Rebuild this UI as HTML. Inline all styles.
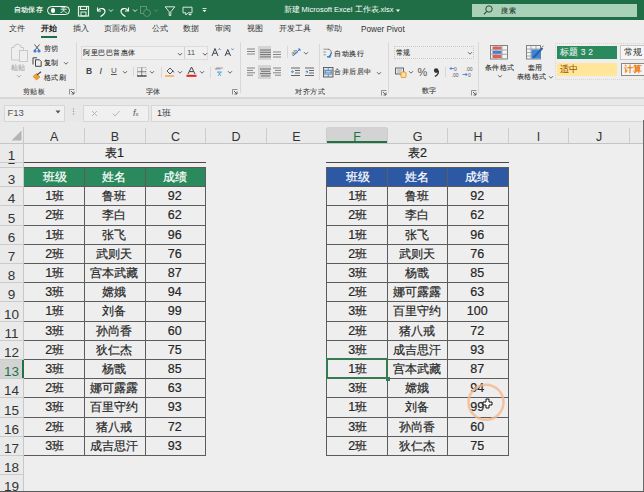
<!DOCTYPE html><html><head><meta charset="utf-8"><style>
*{margin:0;padding:0;box-sizing:border-box}
html,body{width:644px;height:492px;overflow:hidden}
body{position:relative;background:#eeeeee;font-family:"Liberation Sans",sans-serif;}
.a{position:absolute}
.t{position:absolute;white-space:nowrap}
</style></head><body>
<div class="a" style="left:0px;top:0px;width:644px;height:20px;background:#1f6e45;"></div>
<div class="t" style="left:14px;top:4.7px;height:9px;line-height:9px;font-size:7px;color:#ffffff;font-weight:normal;letter-spacing:0.2px;-webkit-text-stroke:0.15px #fff">自动保存</div>
<div class="a" style="left:46.5px;top:5.5px;width:23.5px;height:9.5px;border:1px solid #fff;border-radius:5px"></div>
<div class="a" style="left:50.5px;top:8px;width:4.5px;height:4.5px;background:#fff;border-radius:50%"></div>
<div class="t" style="left:59.5px;top:5.8px;height:8px;line-height:8px;font-size:6.5px;color:#ffffff;font-weight:normal;">关</div>
<svg class="a" style="left:77px;top:5px;" width="13" height="12" viewBox="0 0 13 12"><rect x="1.5" y="1.5" width="10" height="9.5" fill="none" stroke="#e8f0ea" stroke-width="1.2"/><rect x="3.5" y="1.5" width="6" height="3" fill="none" stroke="#e8f0ea" stroke-width="1"/><rect x="4" y="7" width="5" height="4" fill="none" stroke="#e8f0ea" stroke-width="1"/></svg>
<svg class="a" style="left:95px;top:5px;" width="12" height="12" viewBox="0 0 12 12"><path d="M2.5 2.5 L2.5 6 L6 6" fill="none" stroke="#fff" stroke-width="1.1"/><path d="M2.8 5.8 C5 2.5 10 3 10 6.5 C10 9 8 10 5.5 11.5" fill="none" stroke="#fff" stroke-width="1.1"/></svg>
<svg class="a" style="left:108px;top:8px;" width="6" height="5" viewBox="0 0 6 5"><path d="M1 1.5 L3 3.5 L5 1.5" fill="none" stroke="#fff" stroke-width="0.9"/></svg>
<svg class="a" style="left:119px;top:5px;" width="12" height="12" viewBox="0 0 12 12"><path d="M9.5 2.5 L9.5 6 L6 6" fill="none" stroke="#fff" stroke-width="1.1"/><path d="M9.2 5.8 C7 2.5 2 3 2 6.5 C2 9 4 10 6.5 11.5" fill="none" stroke="#fff" stroke-width="1.1"/></svg>
<svg class="a" style="left:132px;top:8px;" width="6" height="5" viewBox="0 0 6 5"><path d="M1 1.5 L3 3.5 L5 1.5" fill="none" stroke="#fff" stroke-width="0.9"/></svg>
<svg class="a" style="left:139px;top:5px;" width="13" height="12" viewBox="0 0 13 12"><rect x="1.5" y="1.5" width="6" height="7" fill="none" stroke="#5d9577" stroke-width="1"/><circle cx="8" cy="8" r="3.5" fill="#1f6e45" stroke="#5d9577" stroke-width="1"/></svg>
<svg class="a" style="left:153px;top:8px;" width="6" height="5" viewBox="0 0 6 5"><path d="M1 1.5 L3 3.5 L5 1.5" fill="none" stroke="#5d9577" stroke-width="0.9"/></svg>
<svg class="a" style="left:164px;top:5px;" width="12" height="12" viewBox="0 0 12 12"><path d="M1.2 1.8 L10.8 1.8 L6.8 6.8 L6.8 10.5 L5.2 10.5 L5.2 6.8 Z" fill="none" stroke="#f0f5f2" stroke-width="0.9" stroke-linejoin="round"/></svg>
<svg class="a" style="left:182px;top:6px;" width="11" height="10" viewBox="0 0 11 10"><path d="M1 1.2 L10 1.2 L10 6.8 L6 6.8 L3.8 9 L3.8 6.8 L1 6.8 Z" fill="none" stroke="#f0f5f2" stroke-width="0.9"/><path d="M9.5 8.5 L7 8.5 M8 7.5 L7 8.5 L8 9.5" fill="none" stroke="#fff" stroke-width="0.8"/></svg>
<svg class="a" style="left:201px;top:7px;" width="7" height="6" viewBox="0 0 7 6"><rect x="1.5" y="1" width="4" height="1" fill="#cfe0d5"/><path d="M1.5 3 L5.5 3 L3.5 5 Z" fill="#fff"/></svg>
<div class="t" style="left:283.5px;top:5.0px;height:10px;line-height:10px;font-size:7.5px;color:#ffffff;font-weight:normal;">新建 Microsoft Excel 工作表.xlsx</div>
<svg class="a" style="left:395px;top:8px;" width="6" height="5" viewBox="0 0 6 5"><path d="M1 1.5 L5 1.5 L3 4 Z" fill="#fff"/></svg>
<div class="a" style="left:472px;top:4px;width:165px;height:13px;background:#a8d1b7;"></div>
<svg class="a" style="left:482px;top:4px;" width="12" height="13" viewBox="0 0 12 13"><circle cx="7" cy="5" r="3.2" fill="none" stroke="#2e4a3a" stroke-width="1"/><path d="M4.7 7.3 L2 10.3" stroke="#2e4a3a" stroke-width="1.1"/></svg>
<div class="t" style="left:501px;top:5.7px;height:9px;line-height:9px;font-size:7px;color:#2a3a30;font-weight:normal;letter-spacing:0.5px;-webkit-text-stroke:0.1px #2a3a30;">搜索</div>
<div class="t" style="left:8.5px;top:24.3px;height:10px;line-height:10px;font-size:8px;color:#333333;font-weight:normal;">文件</div>
<div class="t" style="left:41px;top:24.3px;height:10px;line-height:10px;font-size:8px;color:#1a1a1a;font-weight:bold;">开始</div>
<div class="t" style="left:72.7px;top:24.3px;height:10px;line-height:10px;font-size:8px;color:#333333;font-weight:normal;">插入</div>
<div class="t" style="left:104px;top:24.3px;height:10px;line-height:10px;font-size:8px;color:#333333;font-weight:normal;">页面布局</div>
<div class="t" style="left:152px;top:24.3px;height:10px;line-height:10px;font-size:8px;color:#333333;font-weight:normal;">公式</div>
<div class="t" style="left:183px;top:24.3px;height:10px;line-height:10px;font-size:8px;color:#333333;font-weight:normal;">数据</div>
<div class="t" style="left:215px;top:24.3px;height:10px;line-height:10px;font-size:8px;color:#333333;font-weight:normal;">审阅</div>
<div class="t" style="left:247px;top:24.3px;height:10px;line-height:10px;font-size:8px;color:#333333;font-weight:normal;">视图</div>
<div class="t" style="left:279px;top:24.3px;height:10px;line-height:10px;font-size:8px;color:#333333;font-weight:normal;">开发工具</div>
<div class="t" style="left:326px;top:24.3px;height:10px;line-height:10px;font-size:8px;color:#333333;font-weight:normal;">帮助</div>
<div class="t" style="left:361px;top:23.8px;height:11px;line-height:11px;font-size:8.2px;color:#333333;font-weight:normal;">Power Pivot</div>
<div class="a" style="left:41px;top:36px;width:16px;height:2px;background:#1f6e45;"></div>
<div class="a" style="left:0px;top:97px;width:644px;height:1px;background:#dcd6d3;"></div>
<div class="a" style="left:0px;top:98px;width:644px;height:1px;background:#d6d6d6;"></div>
<svg class="a" style="left:10px;top:43px;" width="19" height="20" viewBox="0 0 19 20"><path d="M1.5 4.5 L1.5 17 L9 17 M13.5 4.5 L13.5 7" fill="none" stroke="#c4c4c4" stroke-width="0.9"/><path d="M1.5 4.5 L4 4.5 L4 2.8 L7.5 1 L11 2.8 L11 4.5 L13.5 4.5" fill="none" stroke="#c8c0bc" stroke-width="0.9"/><rect x="9.5" y="7.5" width="8" height="11" fill="#eeeeee" stroke="#c4c4c4" stroke-width="0.9"/></svg>
<div class="t" style="left:10.5px;top:62.5px;height:9px;line-height:9px;font-size:7px;color:#a8a8a8;font-weight:normal;letter-spacing:0.5px;-webkit-text-stroke:0.1px #a8a8a8;">粘贴</div>
<svg class="a" style="left:15.5px;top:74px;" width="6" height="5" viewBox="0 0 6 5"><path d="M1 1.2 L3 3.2 L5 1.2" fill="none" stroke="#a0a0a0" stroke-width="0.9"/></svg>
<svg class="a" style="left:33px;top:44px;" width="8" height="9" viewBox="0 0 8 9"><path d="M1.5 0.5 L6 6 M6.5 0.5 L2 6" stroke="#444" stroke-width="0.9"/><circle cx="2" cy="7" r="1.6" fill="#3b7dd8"/><circle cx="6" cy="7" r="1.6" fill="#3b7dd8"/></svg>
<div class="t" style="left:43.5px;top:44.2px;height:9px;line-height:9px;font-size:7px;color:#333333;font-weight:normal;letter-spacing:0.5px;-webkit-text-stroke:0.1px #333333;">剪切</div>
<svg class="a" style="left:32px;top:57px;" width="10" height="10" viewBox="0 0 10 10"><path d="M1 7.5 L1 0.8 L5 0.8" fill="none" stroke="#444" stroke-width="1"/><path d="M3.5 2.8 L7.5 2.8 L9.2 4.5 L9.2 9.3 L3.5 9.3 Z" fill="none" stroke="#444" stroke-width="1"/></svg>
<div class="t" style="left:43.5px;top:58.0px;height:9px;line-height:9px;font-size:7px;color:#333333;font-weight:normal;letter-spacing:0.5px;-webkit-text-stroke:0.1px #333333;">复制</div>
<svg class="a" style="left:62.5px;top:61px;" width="6" height="5" viewBox="0 0 6 5"><path d="M1 1.2 L3 3.2 L5 1.2" fill="none" stroke="#555" stroke-width="0.9"/></svg>
<svg class="a" style="left:32px;top:71px;" width="10" height="10" viewBox="0 0 10 10"><path d="M1 5.5 L4.5 2.5 L8 6 L4.5 9 Z" fill="#f0a030" stroke="#d07c10" stroke-width="0.6"/><path d="M5 4 L9 0.8" stroke="#444" stroke-width="1.1"/></svg>
<div class="t" style="left:43.5px;top:72.5px;height:9px;line-height:9px;font-size:7px;color:#333333;font-weight:normal;letter-spacing:0.5px;-webkit-text-stroke:0.1px #333333;">格式刷</div>
<div class="t" style="left:22.5px;top:87.0px;height:9px;line-height:9px;font-size:7px;color:#444;font-weight:normal;letter-spacing:0.5px;-webkit-text-stroke:0.1px #444;">剪贴板</div>
<svg class="a" style="left:69px;top:89px;" width="6" height="6" viewBox="0 0 6 6"><path d="M0.5 0.5 L5.5 0.5 M0.5 0.5 L0.5 5.5" stroke="#777" stroke-width="0.8"/><path d="M2 2 L5 5 M5 2.5 L5 5 L2.5 5" stroke="#555" stroke-width="0.9" fill="none"/></svg>
<div class="a" style="left:76px;top:42px;width:1px;height:51px;background:#ddd6d2"></div>
<div class="a" style="left:81px;top:46px;width:127px;height:13.5px;border:1px solid #e0dbd8;background:#f0f0f0"></div>
<div class="a" style="left:184px;top:47px;width:1px;height:12px;background:#d0d0d0;"></div>
<div class="t" style="left:83px;top:48.4px;height:9px;line-height:9px;font-size:7px;color:#333;font-weight:normal;letter-spacing:0.5px;-webkit-text-stroke:0.1px #333;">阿里巴巴普惠体</div>
<svg class="a" style="left:177px;top:51.5px;" width="6" height="5" viewBox="0 0 6 5"><path d="M1 1.2 L3 3.2 L5 1.2" fill="none" stroke="#444" stroke-width="0.9"/></svg>
<div class="t" style="left:187px;top:48.0px;height:10px;line-height:10px;font-size:8px;color:#555;font-weight:normal;">11</div>
<svg class="a" style="left:201.5px;top:51.5px;" width="6" height="5" viewBox="0 0 6 5"><path d="M1 1.2 L3 3.2 L5 1.2" fill="none" stroke="#444" stroke-width="0.9"/></svg>
<svg class="a" style="left:211px;top:47px;" width="10" height="10" viewBox="0 0 10 10"><path d="M1 9 L4 1.5 L7 9 M2.2 6.3 L5.8 6.3" fill="none" stroke="#444" stroke-width="1"/><path d="M7.5 3 L8.5 1.5 L9.5 3" fill="none" stroke="#3b7dd8" stroke-width="0.8"/></svg>
<svg class="a" style="left:224px;top:47px;" width="10" height="10" viewBox="0 0 10 10"><path d="M1 9 L3.8 2.5 L6.6 9 M2 6.8 L5.6 6.8" fill="none" stroke="#444" stroke-width="1"/><path d="M7.5 1.5 L8.5 3 L9.5 1.5" fill="none" stroke="#3b7dd8" stroke-width="0.8"/></svg>
<div class="t" style="left:86px;top:65.9px;height:11px;line-height:11px;font-size:8.5px;color:#444;font-weight:bold;">B</div>
<div class="t" style="left:99.5px;top:65.4px;height:12px;line-height:12px;font-size:9px;color:#333;font-weight:normal;font-style:italic;font-family:"Liberation Serif",serif">I</div>
<div class="t" style="left:111px;top:66.4px;height:10px;line-height:10px;font-size:8px;color:#555;font-weight:normal;text-decoration:underline">U</div>
<svg class="a" style="left:121.5px;top:70px;" width="6" height="5" viewBox="0 0 6 5"><path d="M1 1.2 L3 3.2 L5 1.2" fill="none" stroke="#555" stroke-width="0.9"/></svg>
<div class="a" style="left:132.5px;top:67px;width:1px;height:9px;background:#ddd6d2"></div>
<svg class="a" style="left:137px;top:67px;" width="10" height="10" viewBox="0 0 10 10"><rect x="0.5" y="0.5" width="8.5" height="8.5" fill="none" stroke="#888" stroke-width="0.8" stroke-dasharray="1 1"/><path d="M4.75 0.5 L4.75 9 M0.5 4.75 L9 4.75" stroke="#666" stroke-width="0.8"/><path d="M0 9 L9.5 9" stroke="#333" stroke-width="1.2"/></svg>
<svg class="a" style="left:149px;top:70px;" width="6" height="5" viewBox="0 0 6 5"><path d="M1 1.2 L3 3.2 L5 1.2" fill="none" stroke="#555" stroke-width="0.9"/></svg>
<div class="a" style="left:160.5px;top:67px;width:1px;height:11px;background:#ddd6d2"></div>
<svg class="a" style="left:165px;top:66px;" width="10" height="11" viewBox="0 0 10 11"><path d="M2 5 L5 2 L8 5 L5 8 Z" fill="none" stroke="#444" stroke-width="0.9"/><path d="M8 4.5 L9 6.5" stroke="#3b7dd8" stroke-width="1"/><rect x="0" y="9" width="9" height="2" fill="#f5b870"/></svg>
<svg class="a" style="left:177px;top:70px;" width="6" height="5" viewBox="0 0 6 5"><path d="M1 1.2 L3 3.2 L5 1.2" fill="none" stroke="#555" stroke-width="0.9"/></svg>
<svg class="a" style="left:186px;top:66px;" width="11" height="11" viewBox="0 0 11 11"><path d="M2 8 L5.5 1 L9 8 M3.3 5.6 L7.7 5.6" fill="none" stroke="#444" stroke-width="1"/><rect x="0.5" y="8.8" width="10" height="2" fill="#e0201b"/></svg>
<svg class="a" style="left:199px;top:70px;" width="6" height="5" viewBox="0 0 6 5"><path d="M1 1.2 L3 3.2 L5 1.2" fill="none" stroke="#555" stroke-width="0.9"/></svg>
<div class="a" style="left:209.5px;top:67px;width:1px;height:11px;background:#ddd6d2"></div>
<svg class="a" style="left:214px;top:66px;" width="11" height="11" viewBox="0 0 11 11"><path d="M2 2 L9 2" stroke="#888" stroke-width="0.8"/><text x="1" y="4" font-size="3" fill="#777">wén</text><path d="M3 6 L8 6 M4 6 L7 10 M7 6 L4 10" stroke="#3b9de0" stroke-width="0.8"/></svg>
<svg class="a" style="left:226.5px;top:70px;" width="6" height="5" viewBox="0 0 6 5"><path d="M1 1.2 L3 3.2 L5 1.2" fill="none" stroke="#555" stroke-width="0.9"/></svg>
<div class="t" style="left:145.5px;top:86.5px;height:9px;line-height:9px;font-size:7px;color:#444;font-weight:normal;letter-spacing:0.5px;-webkit-text-stroke:0.1px #444;">字体</div>
<svg class="a" style="left:232px;top:89px;" width="6" height="6" viewBox="0 0 6 6"><path d="M0.5 0.5 L5.5 0.5 M0.5 0.5 L0.5 5.5" stroke="#777" stroke-width="0.8"/><path d="M2 2 L5 5 M5 2.5 L5 5 L2.5 5" stroke="#555" stroke-width="0.9" fill="none"/></svg>
<div class="a" style="left:239.5px;top:42px;width:1px;height:51px;background:#ddd6d2"></div>
<div class="a" style="left:258px;top:46px;width:13px;height:13.5px;background:#d4d4d4;"></div>
<div class="a" style="left:258px;top:65px;width:13px;height:13.5px;background:#d4d4d4;"></div>
<svg class="a" style="left:247px;top:47.5px;" width="12" height="12" viewBox="0 0 12 12"><path d="M0 1.0 L8 1.0" stroke="#6a6a6a" stroke-width="0.8"/><path d="M0 3.5 L8 3.5" stroke="#6a6a6a" stroke-width="0.8"/><path d="M0 6.0 L8 6.0" stroke="#6a6a6a" stroke-width="0.8"/></svg>
<svg class="a" style="left:259px;top:48.5px;" width="12" height="12" viewBox="0 0 12 12"><path d="M1 1.0 L12 1.0" stroke="#555" stroke-width="0.8"/><path d="M1 3.3 L12 3.3" stroke="#555" stroke-width="0.8"/><path d="M1 5.6 L12 5.6" stroke="#555" stroke-width="0.8"/><path d="M1 7.8999999999999995 L12 7.8999999999999995" stroke="#555" stroke-width="0.8"/></svg>
<svg class="a" style="left:273px;top:51px;" width="12" height="12" viewBox="0 0 12 12"><path d="M0 1.0 L8 1.0" stroke="#6a6a6a" stroke-width="0.8"/><path d="M0 3.5 L8 3.5" stroke="#6a6a6a" stroke-width="0.8"/><path d="M0 6.0 L8 6.0" stroke="#6a6a6a" stroke-width="0.8"/></svg>
<svg class="a" style="left:247px;top:67px;" width="12" height="12" viewBox="0 0 12 12"><path d="M0 1.0 L8 1.0" stroke="#6a6a6a" stroke-width="0.8"/><path d="M0 3.4 L6 3.4" stroke="#6a6a6a" stroke-width="0.8"/><path d="M0 5.8 L8 5.8" stroke="#6a6a6a" stroke-width="0.8"/><path d="M0 8.2 L6 8.2" stroke="#6a6a6a" stroke-width="0.8"/></svg>
<svg class="a" style="left:259px;top:67.5px;" width="12" height="12" viewBox="0 0 12 12"><path d="M1 1.0 L12 1.0" stroke="#555" stroke-width="0.8"/><path d="M2 3.3 L11 3.3" stroke="#555" stroke-width="0.8"/><path d="M1 5.6 L12 5.6" stroke="#555" stroke-width="0.8"/><path d="M2 7.8999999999999995 L11 7.8999999999999995" stroke="#555" stroke-width="0.8"/></svg>
<svg class="a" style="left:273px;top:67px;" width="12" height="12" viewBox="0 0 12 12"><path d="M0 1.0 L8 1.0" stroke="#6a6a6a" stroke-width="0.8"/><path d="M2 3.4 L8 3.4" stroke="#6a6a6a" stroke-width="0.8"/><path d="M0 5.8 L8 5.8" stroke="#6a6a6a" stroke-width="0.8"/><path d="M2 8.2 L8 8.2" stroke="#6a6a6a" stroke-width="0.8"/></svg>
<div class="a" style="left:286.5px;top:46px;width:1px;height:12px;background:#ddd6d2"></div>
<svg class="a" style="left:291px;top:47px;" width="10" height="10" viewBox="0 0 10 10"><text x="0" y="7" font-size="6" fill="#555" transform="rotate(-35 4 5)">ab</text><path d="M2 9 L9 2 M7 2 L9 2 L9 4" fill="none" stroke="#3b7dd8" stroke-width="1"/></svg>
<svg class="a" style="left:302.5px;top:51px;" width="6" height="5" viewBox="0 0 6 5"><path d="M1 1.2 L3 3.2 L5 1.2" fill="none" stroke="#555" stroke-width="0.9"/></svg>
<svg class="a" style="left:291px;top:67px;" width="10" height="10" viewBox="0 0 10 10"><path d="M0 1 L9 1 M4 3.5 L9 3.5 M4 6 L9 6 M0 8.5 L9 8.5" stroke="#555" stroke-width="0.9"/><path d="M3 4.75 L0.5 4.75 M1.8 3.5 L0.5 4.75 L1.8 6" fill="none" stroke="#3b7dd8" stroke-width="0.9"/></svg>
<svg class="a" style="left:304.5px;top:67px;" width="10" height="10" viewBox="0 0 10 10"><path d="M0 1 L9 1 M4 3.5 L9 3.5 M4 6 L9 6 M0 8.5 L9 8.5" stroke="#555" stroke-width="0.9"/><path d="M0.5 4.75 L3 4.75 M1.7 3.5 L3 4.75 L1.7 6" fill="none" stroke="#3b7dd8" stroke-width="0.9"/></svg>
<div class="a" style="left:318.5px;top:44px;width:1px;height:36px;background:#ddd6d2"></div>
<svg class="a" style="left:323px;top:47.5px;" width="11" height="11" viewBox="0 0 11 11"><path d="M0.5 1.2 L5.5 1.2 M0.5 4 L3 4 M0.5 6.8 L3 6.8" stroke="#888" stroke-width="0.9"/><path d="M5 1.2 C9 1.2 9.5 6.5 6 8.2 L4.5 8.8" fill="none" stroke="#777" stroke-width="0.9"/><path d="M8.5 4.5 L6.5 9 M4 8.7 L6.8 9.2 L7.8 6.8" fill="none" stroke="#2f86d6" stroke-width="1.2"/></svg>
<div class="t" style="left:334.4px;top:48.5px;height:9px;line-height:9px;font-size:7px;color:#333333;font-weight:normal;letter-spacing:0.5px;-webkit-text-stroke:0.1px #333333;">自动换行</div>
<svg class="a" style="left:322.5px;top:66.5px;" width="11" height="11" viewBox="0 0 11 11"><rect x="0.5" y="0.5" width="9.5" height="9.5" fill="#d7e6f5" stroke="#555" stroke-width="0.9"/><path d="M0.5 3.3 L10 3.3 M0.5 7 L10 7" stroke="#666" stroke-width="0.8"/><path d="M1.5 5.2 L9 5.2 M3 4.2 L1.5 5.2 L3 6.2 M7.5 4.2 L9 5.2 L7.5 6.2" fill="none" stroke="#2f86d6" stroke-width="0.8"/><path d="M5.25 0.5 L5.25 3.3 M5.25 7 L5.25 10" stroke="#2f86d6" stroke-width="0.8"/></svg>
<div class="t" style="left:334.4px;top:67.4px;height:9px;line-height:9px;font-size:7px;color:#333333;font-weight:normal;letter-spacing:0.5px;-webkit-text-stroke:0.1px #333333;">合并后居中</div>
<svg class="a" style="left:375.5px;top:70.5px;" width="6" height="5" viewBox="0 0 6 5"><path d="M1 1.2 L3 3.2 L5 1.2" fill="none" stroke="#555" stroke-width="0.9"/></svg>
<div class="t" style="left:295px;top:87.1px;height:9px;line-height:9px;font-size:7px;color:#444;font-weight:normal;letter-spacing:0.5px;-webkit-text-stroke:0.1px #444;">对齐方式</div>
<svg class="a" style="left:381px;top:89.5px;" width="6" height="6" viewBox="0 0 6 6"><path d="M0.5 0.5 L5.5 0.5 M0.5 0.5 L0.5 5.5" stroke="#777" stroke-width="0.8"/><path d="M2 2 L5 5 M5 2.5 L5 5 L2.5 5" stroke="#555" stroke-width="0.9" fill="none"/></svg>
<div class="a" style="left:388.4px;top:42px;width:1px;height:51px;background:#ddd6d2"></div>
<div class="a" style="left:393.5px;top:46px;width:80.5px;height:13px;border:1px dotted #cfc6c2"></div>
<div class="t" style="left:395.6px;top:48.2px;height:9px;line-height:9px;font-size:7px;color:#333;font-weight:normal;letter-spacing:0.5px;-webkit-text-stroke:0.1px #333;">常规</div>
<svg class="a" style="left:466.5px;top:51px;" width="6" height="5" viewBox="0 0 6 5"><path d="M1 1.2 L3 3.2 L5 1.2" fill="none" stroke="#555" stroke-width="0.9"/></svg>
<svg class="a" style="left:395px;top:67px;" width="12" height="11" viewBox="0 0 12 11"><rect x="0.5" y="1" width="8" height="6" fill="none" stroke="#555" stroke-width="0.9"/><path d="M2 3 L7 3 M2 5 L6 5" stroke="#777" stroke-width="0.6"/><rect x="6" y="5" width="5" height="5.5" rx="1" fill="#fbe1a8" stroke="#e8921a" stroke-width="0.9"/></svg>
<svg class="a" style="left:407.5px;top:70px;" width="6" height="5" viewBox="0 0 6 5"><path d="M1 1.2 L3 3.2 L5 1.2" fill="none" stroke="#555" stroke-width="0.9"/></svg>
<div class="t" style="left:417.5px;top:65.0px;height:14px;line-height:14px;font-size:11px;color:#555;font-weight:normal;">%</div>
<svg class="a" style="left:433px;top:68px;" width="7" height="9" viewBox="0 0 7 9"><circle cx="3.2" cy="2.6" r="2.3" fill="#333"/><path d="M5.3 2.8 C5.6 5.5 4 7.5 1.8 8.3" fill="none" stroke="#333" stroke-width="1.4"/></svg>
<div class="a" style="left:444.8px;top:67px;width:1px;height:10px;background:#ddd6d2"></div>
<svg class="a" style="left:449px;top:66px;" width="11" height="11" viewBox="0 0 11 11"><text x="5" y="4.5" font-size="5" fill="#555">0</text><text x="2.5" y="10.5" font-size="5" fill="#555">.00</text><path d="M5 2.5 L1 2.5 M2.5 1 L1 2.5 L2.5 4" fill="none" stroke="#3b7dd8" stroke-width="0.9"/></svg>
<svg class="a" style="left:462px;top:66px;" width="11" height="11" viewBox="0 0 11 11"><text x="3.5" y="4.5" font-size="5" fill="#555">.00</text><text x="6" y="10.5" font-size="5" fill="#555">0</text><path d="M0.5 8.5 L5 8.5 M3.5 7 L5 8.5 L3.5 10" fill="none" stroke="#3b7dd8" stroke-width="0.9"/></svg>
<div class="t" style="left:421.5px;top:86.3px;height:9px;line-height:9px;font-size:7px;color:#444;font-weight:normal;letter-spacing:0.5px;-webkit-text-stroke:0.1px #444;">数字</div>
<svg class="a" style="left:471px;top:89.5px;" width="6" height="6" viewBox="0 0 6 6"><path d="M0.5 0.5 L5.5 0.5 M0.5 0.5 L0.5 5.5" stroke="#777" stroke-width="0.8"/><path d="M2 2 L5 5 M5 2.5 L5 5 L2.5 5" stroke="#555" stroke-width="0.9" fill="none"/></svg>
<div class="a" style="left:478.4px;top:42px;width:1px;height:51px;background:#ddd6d2"></div>
<svg class="a" style="left:490px;top:45px;" width="18" height="15" viewBox="0 0 18 15"><rect x="0.5" y="0.5" width="17" height="13.5" fill="#f4f4f4" stroke="#777" stroke-width="0.9"/><rect x="2.5" y="1.5" width="9" height="3" fill="#e85a4f"/><rect x="2.5" y="5.8" width="9" height="3" fill="#3b7dd8"/><rect x="2.5" y="10" width="9" height="3" fill="#e85a4f"/><path d="M0.5 5 L17.5 5 M0.5 9.3 L17.5 9.3 M6 0.5 L6 14 M12 0.5 L12 14" stroke="#888" stroke-width="0.7"/></svg>
<div class="t" style="left:484.6px;top:63.0px;height:9px;line-height:9px;font-size:7px;color:#333333;font-weight:normal;letter-spacing:0.5px;-webkit-text-stroke:0.1px #333333;">条件格式</div>
<svg class="a" style="left:497px;top:73.6px;" width="6" height="5" viewBox="0 0 6 5"><path d="M1 1.2 L3 3.2 L5 1.2" fill="none" stroke="#555" stroke-width="0.9"/></svg>
<svg class="a" style="left:526px;top:45px;" width="18" height="15" viewBox="0 0 18 15"><rect x="0.5" y="0.5" width="14" height="13.5" fill="#f4f4f4" stroke="#777" stroke-width="0.9"/><path d="M0.5 4 L14.5 4 M0.5 7.5 L14.5 7.5 M0.5 11 L14.5 11 M5 0.5 L5 14 M10 0.5 L10 14" stroke="#888" stroke-width="0.7"/><rect x="5.5" y="4.5" width="9" height="9" fill="#3b86d8"/><path d="M7 13 L16.5 3" stroke="#2a60a8" stroke-width="2"/><path d="M16 2 L17.5 0.8" stroke="#777" stroke-width="1"/></svg>
<div class="t" style="left:527.8px;top:63.0px;height:9px;line-height:9px;font-size:7px;color:#333333;font-weight:normal;letter-spacing:0.5px;-webkit-text-stroke:0.1px #333333;">套用</div>
<div class="t" style="left:516.6px;top:71.5px;height:9px;line-height:9px;font-size:7px;color:#333333;font-weight:normal;letter-spacing:0.5px;-webkit-text-stroke:0.1px #333333;">表格格式</div>
<svg class="a" style="left:547.5px;top:74.5px;" width="6" height="5" viewBox="0 0 6 5"><path d="M1 1.2 L3 3.2 L5 1.2" fill="none" stroke="#555" stroke-width="0.9"/></svg>
<div class="a" style="left:555px;top:42.5px;width:95px;height:37px;border:1px dotted #e0d4ce"></div>
<div class="a" style="left:557px;top:46px;width:60px;height:12.5px;background:#2a8a5e;"></div>
<div class="t" style="left:560.2px;top:46.5px;height:11px;line-height:11px;font-size:8.5px;color:#e3f0e8;font-weight:normal;letter-spacing:0.1px;-webkit-text-stroke:0.1px #e3f0e8">标题 3 2</div>
<div class="a" style="left:619.5px;top:44.5px;width:30px;height:15.5px;border:1.5px solid #c8c8c8;background:#f6f6f6"></div>
<div class="t" style="left:623.7px;top:46.8px;height:11px;line-height:11px;font-size:8.5px;color:#333;font-weight:normal;letter-spacing:0.3px">常规</div>
<div class="a" style="left:557px;top:63px;width:60px;height:12.7px;background:#ffe69a;"></div>
<div class="t" style="left:559.5px;top:63.8px;height:11px;line-height:11px;font-size:8.5px;color:#9c5700;font-weight:normal;letter-spacing:0.3px;-webkit-text-stroke:0.1px #9c5700">适中</div>
<div class="a" style="left:621px;top:63px;width:30px;height:12.7px;border:1px solid #888;background:#f4f4f4"></div>
<div class="t" style="left:623.7px;top:63.8px;height:11px;line-height:11px;font-size:8.5px;color:#f07d10;font-weight:bold;letter-spacing:0.3px">计算</div>
<div class="a" style="left:0px;top:99px;width:644px;height:23px;background:#e8e8e8;"></div>
<div class="a" style="left:3.5px;top:104.5px;width:61px;height:17px;border:1px solid #d6d6d6;background:#f0f0f0"></div>
<div class="t" style="left:7.5px;top:107.2px;height:12px;line-height:12px;font-size:9.5px;color:#555;font-weight:normal;">F13</div>
<svg class="a" style="left:55px;top:110px;" width="6" height="4" viewBox="0 0 6 4"><path d="M0.5 0.5 L5.5 0.5 L3 3.5 Z" fill="#555"/></svg>
<svg class="a" style="left:72px;top:108px;" width="3" height="8" viewBox="0 0 3 8"><circle cx="1.5" cy="1" r="0.7" fill="#999"/><circle cx="1.5" cy="3.5" r="0.7" fill="#999"/><circle cx="1.5" cy="6" r="0.7" fill="#999"/></svg>
<div class="a" style="left:82.5px;top:105px;width:66px;height:16.5px;border:1px solid #d6d6d6;background:#f0f0f0"></div>
<svg class="a" style="left:90.5px;top:110px;" width="7" height="7" viewBox="0 0 7 7"><path d="M1 1 L6 6 M6 1 L1 6" stroke="#b0b0b0" stroke-width="0.9"/></svg>
<svg class="a" style="left:111.5px;top:110px;" width="8" height="7" viewBox="0 0 8 7"><path d="M0.8 3.5 L3 6 L7.5 1" fill="none" stroke="#b0b0b0" stroke-width="0.9"/></svg>
<div class="t" style="left:133px;top:107.0px;height:12px;line-height:12px;font-size:9px;color:#555;font-weight:normal;font-family:"Liberation Serif",serif"><i>f</i><span style="font-size:6px">x</span></div>
<div class="a" style="left:150.5px;top:104.5px;width:500px;height:17px;border:1px solid #d6d6d6;background:#f0f0f0"></div>
<div class="t" style="left:157px;top:107.0px;height:12px;line-height:12px;font-size:9px;color:#333;font-weight:normal;">1班</div>
<div class="a" style="left:0px;top:122px;width:644px;height:21px;background:#eaeaea;"></div>
<div class="a" style="left:0px;top:143px;width:644px;height:1px;background:#c4c4c4;"></div>
<div class="a" style="left:0px;top:144px;width:23px;height:348px;background:#eaeaea;"></div>
<svg class="a" style="left:11px;top:130px;" width="11" height="11" viewBox="0 0 11 11"><path d="M10.5 0.5 L10.5 10.5 L0.5 10.5 Z" fill="#b4b4b4"/></svg>
<div class="t" style="left:-95.75px;width:300px;text-align:center;top:129.1px;height:16px;line-height:16px;font-size:12.5px;color:#333;font-weight:normal;">A</div>
<div class="a" style="left:84px;top:128px;width:1px;height:15px;background:#cdcdcd;"></div>
<div class="t" style="left:-35.0px;width:300px;text-align:center;top:129.1px;height:16px;line-height:16px;font-size:12.5px;color:#333;font-weight:normal;">B</div>
<div class="a" style="left:145px;top:128px;width:1px;height:15px;background:#cdcdcd;"></div>
<div class="t" style="left:25.5px;width:300px;text-align:center;top:129.1px;height:16px;line-height:16px;font-size:12.5px;color:#333;font-weight:normal;">C</div>
<div class="a" style="left:205px;top:128px;width:1px;height:15px;background:#cdcdcd;"></div>
<div class="t" style="left:86.0px;width:300px;text-align:center;top:129.1px;height:16px;line-height:16px;font-size:12.5px;color:#333;font-weight:normal;">D</div>
<div class="a" style="left:266px;top:128px;width:1px;height:15px;background:#cdcdcd;"></div>
<div class="t" style="left:146.5px;width:300px;text-align:center;top:129.1px;height:16px;line-height:16px;font-size:12.5px;color:#333;font-weight:normal;">E</div>
<div class="a" style="left:326px;top:128px;width:1px;height:15px;background:#cdcdcd;"></div>
<div class="a" style="left:327px;top:127px;width:60px;height:16px;background:#d3d3d3;"></div>
<div class="a" style="left:327px;top:141px;width:60px;height:2px;background:#217346;"></div>
<div class="t" style="left:207.0px;width:300px;text-align:center;top:129.1px;height:16px;line-height:16px;font-size:12.5px;color:#217346;font-weight:normal;">F</div>
<div class="a" style="left:387px;top:128px;width:1px;height:15px;background:#cdcdcd;"></div>
<div class="t" style="left:267.5px;width:300px;text-align:center;top:129.1px;height:16px;line-height:16px;font-size:12.5px;color:#333;font-weight:normal;">G</div>
<div class="a" style="left:447px;top:128px;width:1px;height:15px;background:#cdcdcd;"></div>
<div class="t" style="left:328.0px;width:300px;text-align:center;top:129.1px;height:16px;line-height:16px;font-size:12.5px;color:#333;font-weight:normal;">H</div>
<div class="a" style="left:508px;top:128px;width:1px;height:15px;background:#cdcdcd;"></div>
<div class="t" style="left:388.5px;width:300px;text-align:center;top:129.1px;height:16px;line-height:16px;font-size:12.5px;color:#333;font-weight:normal;">I</div>
<div class="a" style="left:568px;top:128px;width:1px;height:15px;background:#cdcdcd;"></div>
<div class="t" style="left:449.0px;width:300px;text-align:center;top:129.1px;height:16px;line-height:16px;font-size:12.5px;color:#333;font-weight:normal;">J</div>
<div class="a" style="left:629px;top:128px;width:1px;height:15px;background:#cdcdcd;"></div>
<div class="a" style="left:0px;top:162px;width:23px;height:1px;background:#cbcbcb;"></div>
<div class="t" style="left:0;width:23px;text-align:center;top:148.1px;height:16px;line-height:16px;font-size:13.5px;color:#333">1</div>
<div class="a" style="left:0px;top:167px;width:23px;height:1px;background:#cbcbcb;"></div>
<div class="a" style="left:0;top:163px;width:23px;height:4px;overflow:hidden"><div class="t" style="left:0;width:23px;text-align:center;top:-11px;font-size:13.5px;height:16px;line-height:16px;color:#333">2</div></div>
<div class="a" style="left:0px;top:186px;width:23px;height:1px;background:#cbcbcb;"></div>
<div class="t" style="left:0;width:23px;text-align:center;top:172.1px;height:16px;line-height:16px;font-size:13.5px;color:#333">3</div>
<div class="a" style="left:0px;top:205px;width:23px;height:1px;background:#cbcbcb;"></div>
<div class="t" style="left:0;width:23px;text-align:center;top:191.1px;height:16px;line-height:16px;font-size:13.5px;color:#333">4</div>
<div class="a" style="left:0px;top:225px;width:23px;height:1px;background:#cbcbcb;"></div>
<div class="t" style="left:0;width:23px;text-align:center;top:210.6px;height:16px;line-height:16px;font-size:13.5px;color:#333">5</div>
<div class="a" style="left:0px;top:244px;width:23px;height:1px;background:#cbcbcb;"></div>
<div class="t" style="left:0;width:23px;text-align:center;top:230.1px;height:16px;line-height:16px;font-size:13.5px;color:#333">6</div>
<div class="a" style="left:0px;top:263px;width:23px;height:1px;background:#cbcbcb;"></div>
<div class="t" style="left:0;width:23px;text-align:center;top:249.1px;height:16px;line-height:16px;font-size:13.5px;color:#333">7</div>
<div class="a" style="left:0px;top:282px;width:23px;height:1px;background:#cbcbcb;"></div>
<div class="t" style="left:0;width:23px;text-align:center;top:268.1px;height:16px;line-height:16px;font-size:13.5px;color:#333">8</div>
<div class="a" style="left:0px;top:301px;width:23px;height:1px;background:#cbcbcb;"></div>
<div class="t" style="left:0;width:23px;text-align:center;top:287.1px;height:16px;line-height:16px;font-size:13.5px;color:#333">9</div>
<div class="a" style="left:0px;top:321px;width:23px;height:1px;background:#cbcbcb;"></div>
<div class="t" style="left:0;width:23px;text-align:center;top:306.6px;height:16px;line-height:16px;font-size:13.5px;color:#333">10</div>
<div class="a" style="left:0px;top:340px;width:23px;height:1px;background:#cbcbcb;"></div>
<div class="t" style="left:0;width:23px;text-align:center;top:326.1px;height:16px;line-height:16px;font-size:13.5px;color:#333">11</div>
<div class="a" style="left:0px;top:359px;width:23px;height:1px;background:#cbcbcb;"></div>
<div class="t" style="left:0;width:23px;text-align:center;top:345.1px;height:16px;line-height:16px;font-size:13.5px;color:#333">12</div>
<div class="a" style="left:0px;top:360px;width:23px;height:18px;background:#d3d3d3;"></div>
<div class="a" style="left:0px;top:378px;width:23px;height:1px;background:#cbcbcb;"></div>
<div class="t" style="left:0;width:23px;text-align:center;top:364.1px;height:16px;line-height:16px;font-size:13.5px;color:#217346">13</div>
<div class="a" style="left:0px;top:397px;width:23px;height:1px;background:#cbcbcb;"></div>
<div class="t" style="left:0;width:23px;text-align:center;top:383.1px;height:16px;line-height:16px;font-size:13.5px;color:#333">14</div>
<div class="a" style="left:0px;top:417px;width:23px;height:1px;background:#cbcbcb;"></div>
<div class="t" style="left:0;width:23px;text-align:center;top:402.6px;height:16px;line-height:16px;font-size:13.5px;color:#333">15</div>
<div class="a" style="left:0px;top:436px;width:23px;height:1px;background:#cbcbcb;"></div>
<div class="t" style="left:0;width:23px;text-align:center;top:422.1px;height:16px;line-height:16px;font-size:13.5px;color:#333">16</div>
<div class="a" style="left:0px;top:455px;width:23px;height:1px;background:#cbcbcb;"></div>
<div class="t" style="left:0;width:23px;text-align:center;top:441.1px;height:16px;line-height:16px;font-size:13.5px;color:#333">17</div>
<div class="a" style="left:0px;top:474px;width:23px;height:1px;background:#cbcbcb;"></div>
<div class="t" style="left:0;width:23px;text-align:center;top:460.1px;height:16px;line-height:16px;font-size:13.5px;color:#333">18</div>
<div class="a" style="left:0px;top:493px;width:23px;height:1px;background:#cbcbcb;"></div>
<div class="t" style="left:0;width:23px;text-align:center;top:479.1px;height:16px;line-height:16px;font-size:13.5px;color:#333">19</div>
<div class="a" style="left:23px;top:127px;width:1px;height:365px;background:#c8c8c8;"></div>
<div class="a" style="left:22px;top:360px;width:2px;height:18px;background:#217346;"></div>
<div class="a" style="left:643px;top:120px;width:1px;height:372px;background:#6a6a6a;"></div>
<div class="a" style="left:0px;top:491px;width:644px;height:1px;background:#5a5a5a;"></div>
<div class="t" style="left:64.5px;width:100px;text-align:center;top:143.3px;height:18px;line-height:18px;color:#222;-webkit-text-stroke:0.2px #222"><span style="font-size:12px">表</span><span style="font-size:12.5px">1</span></div>
<div class="a" style="left:24px;top:162px;width:182px;height:1px;background:#4a4a4a;"></div>
<div class="a" style="left:24px;top:167px;width:181px;height:19px;background:#2a8a5e;"></div>
<div class="a" style="left:24px;top:167px;width:182px;height:1px;background:#5c5c5c;"></div>
<div class="a" style="left:24px;top:186px;width:182px;height:1px;background:#5c5c5c;"></div>
<div class="a" style="left:24px;top:205px;width:182px;height:1px;background:#5c5c5c;"></div>
<div class="a" style="left:24px;top:225px;width:182px;height:1px;background:#5c5c5c;"></div>
<div class="a" style="left:24px;top:244px;width:182px;height:1px;background:#5c5c5c;"></div>
<div class="a" style="left:24px;top:263px;width:182px;height:1px;background:#5c5c5c;"></div>
<div class="a" style="left:24px;top:282px;width:182px;height:1px;background:#5c5c5c;"></div>
<div class="a" style="left:24px;top:301px;width:182px;height:1px;background:#5c5c5c;"></div>
<div class="a" style="left:24px;top:321px;width:182px;height:1px;background:#5c5c5c;"></div>
<div class="a" style="left:24px;top:340px;width:182px;height:1px;background:#5c5c5c;"></div>
<div class="a" style="left:24px;top:359px;width:182px;height:1px;background:#5c5c5c;"></div>
<div class="a" style="left:24px;top:378px;width:182px;height:1px;background:#5c5c5c;"></div>
<div class="a" style="left:24px;top:397px;width:182px;height:1px;background:#5c5c5c;"></div>
<div class="a" style="left:24px;top:417px;width:182px;height:1px;background:#5c5c5c;"></div>
<div class="a" style="left:24px;top:436px;width:182px;height:1px;background:#5c5c5c;"></div>
<div class="a" style="left:24px;top:455px;width:182px;height:1px;background:#5c5c5c;"></div>
<div class="a" style="left:84px;top:167px;width:1px;height:289px;background:#5c5c5c;"></div>
<div class="a" style="left:145px;top:167px;width:1px;height:289px;background:#5c5c5c;"></div>
<div class="a" style="left:205px;top:167px;width:1px;height:289px;background:#5c5c5c;"></div>
<div class="t" style="left:4.7px;width:100px;text-align:center;top:166.7px;height:18px;line-height:18px;color:#ffffff;-webkit-text-stroke:0.2px #ffffff"><span style="font-size:12px">班级</span></div>
<div class="t" style="left:64.2px;width:100px;text-align:center;top:166.7px;height:18px;line-height:18px;color:#ffffff;-webkit-text-stroke:0.2px #ffffff"><span style="font-size:12px">姓名</span></div>
<div class="t" style="left:124.7px;width:100px;text-align:center;top:166.7px;height:18px;line-height:18px;color:#ffffff;-webkit-text-stroke:0.2px #ffffff"><span style="font-size:12px">成绩</span></div>
<div class="t" style="left:4.7px;width:100px;text-align:center;top:185.7px;height:18px;line-height:18px;color:#262626;-webkit-text-stroke:0.2px #262626"><span style="font-size:12.5px">1</span><span style="font-size:12px">班</span></div>
<div class="t" style="left:64.2px;width:100px;text-align:center;top:185.7px;height:18px;line-height:18px;color:#262626;-webkit-text-stroke:0.2px #262626"><span style="font-size:12px">鲁班</span></div>
<div class="t" style="left:124.7px;width:100px;text-align:center;top:185.7px;height:18px;line-height:18px;color:#262626;-webkit-text-stroke:0.2px #262626"><span style="font-size:12.5px">92</span></div>
<div class="t" style="left:4.7px;width:100px;text-align:center;top:205.2px;height:18px;line-height:18px;color:#262626;-webkit-text-stroke:0.2px #262626"><span style="font-size:12.5px">2</span><span style="font-size:12px">班</span></div>
<div class="t" style="left:64.2px;width:100px;text-align:center;top:205.2px;height:18px;line-height:18px;color:#262626;-webkit-text-stroke:0.2px #262626"><span style="font-size:12px">李白</span></div>
<div class="t" style="left:124.7px;width:100px;text-align:center;top:205.2px;height:18px;line-height:18px;color:#262626;-webkit-text-stroke:0.2px #262626"><span style="font-size:12.5px">62</span></div>
<div class="t" style="left:4.7px;width:100px;text-align:center;top:224.7px;height:18px;line-height:18px;color:#262626;-webkit-text-stroke:0.2px #262626"><span style="font-size:12.5px">1</span><span style="font-size:12px">班</span></div>
<div class="t" style="left:64.2px;width:100px;text-align:center;top:224.7px;height:18px;line-height:18px;color:#262626;-webkit-text-stroke:0.2px #262626"><span style="font-size:12px">张飞</span></div>
<div class="t" style="left:124.7px;width:100px;text-align:center;top:224.7px;height:18px;line-height:18px;color:#262626;-webkit-text-stroke:0.2px #262626"><span style="font-size:12.5px">96</span></div>
<div class="t" style="left:4.7px;width:100px;text-align:center;top:243.7px;height:18px;line-height:18px;color:#262626;-webkit-text-stroke:0.2px #262626"><span style="font-size:12.5px">2</span><span style="font-size:12px">班</span></div>
<div class="t" style="left:64.2px;width:100px;text-align:center;top:243.7px;height:18px;line-height:18px;color:#262626;-webkit-text-stroke:0.2px #262626"><span style="font-size:12px">武则天</span></div>
<div class="t" style="left:124.7px;width:100px;text-align:center;top:243.7px;height:18px;line-height:18px;color:#262626;-webkit-text-stroke:0.2px #262626"><span style="font-size:12.5px">76</span></div>
<div class="t" style="left:4.7px;width:100px;text-align:center;top:262.7px;height:18px;line-height:18px;color:#262626;-webkit-text-stroke:0.2px #262626"><span style="font-size:12.5px">1</span><span style="font-size:12px">班</span></div>
<div class="t" style="left:64.2px;width:100px;text-align:center;top:262.7px;height:18px;line-height:18px;color:#262626;-webkit-text-stroke:0.2px #262626"><span style="font-size:12px">宫本武藏</span></div>
<div class="t" style="left:124.7px;width:100px;text-align:center;top:262.7px;height:18px;line-height:18px;color:#262626;-webkit-text-stroke:0.2px #262626"><span style="font-size:12.5px">87</span></div>
<div class="t" style="left:4.7px;width:100px;text-align:center;top:281.7px;height:18px;line-height:18px;color:#262626;-webkit-text-stroke:0.2px #262626"><span style="font-size:12.5px">3</span><span style="font-size:12px">班</span></div>
<div class="t" style="left:64.2px;width:100px;text-align:center;top:281.7px;height:18px;line-height:18px;color:#262626;-webkit-text-stroke:0.2px #262626"><span style="font-size:12px">嫦娥</span></div>
<div class="t" style="left:124.7px;width:100px;text-align:center;top:281.7px;height:18px;line-height:18px;color:#262626;-webkit-text-stroke:0.2px #262626"><span style="font-size:12.5px">94</span></div>
<div class="t" style="left:4.7px;width:100px;text-align:center;top:301.2px;height:18px;line-height:18px;color:#262626;-webkit-text-stroke:0.2px #262626"><span style="font-size:12.5px">1</span><span style="font-size:12px">班</span></div>
<div class="t" style="left:64.2px;width:100px;text-align:center;top:301.2px;height:18px;line-height:18px;color:#262626;-webkit-text-stroke:0.2px #262626"><span style="font-size:12px">刘备</span></div>
<div class="t" style="left:124.7px;width:100px;text-align:center;top:301.2px;height:18px;line-height:18px;color:#262626;-webkit-text-stroke:0.2px #262626"><span style="font-size:12.5px">99</span></div>
<div class="t" style="left:4.7px;width:100px;text-align:center;top:320.7px;height:18px;line-height:18px;color:#262626;-webkit-text-stroke:0.2px #262626"><span style="font-size:12.5px">3</span><span style="font-size:12px">班</span></div>
<div class="t" style="left:64.2px;width:100px;text-align:center;top:320.7px;height:18px;line-height:18px;color:#262626;-webkit-text-stroke:0.2px #262626"><span style="font-size:12px">孙尚香</span></div>
<div class="t" style="left:124.7px;width:100px;text-align:center;top:320.7px;height:18px;line-height:18px;color:#262626;-webkit-text-stroke:0.2px #262626"><span style="font-size:12.5px">60</span></div>
<div class="t" style="left:4.7px;width:100px;text-align:center;top:339.7px;height:18px;line-height:18px;color:#262626;-webkit-text-stroke:0.2px #262626"><span style="font-size:12.5px">2</span><span style="font-size:12px">班</span></div>
<div class="t" style="left:64.2px;width:100px;text-align:center;top:339.7px;height:18px;line-height:18px;color:#262626;-webkit-text-stroke:0.2px #262626"><span style="font-size:12px">狄仁杰</span></div>
<div class="t" style="left:124.7px;width:100px;text-align:center;top:339.7px;height:18px;line-height:18px;color:#262626;-webkit-text-stroke:0.2px #262626"><span style="font-size:12.5px">75</span></div>
<div class="t" style="left:4.7px;width:100px;text-align:center;top:358.7px;height:18px;line-height:18px;color:#262626;-webkit-text-stroke:0.2px #262626"><span style="font-size:12.5px">3</span><span style="font-size:12px">班</span></div>
<div class="t" style="left:64.2px;width:100px;text-align:center;top:358.7px;height:18px;line-height:18px;color:#262626;-webkit-text-stroke:0.2px #262626"><span style="font-size:12px">杨戬</span></div>
<div class="t" style="left:124.7px;width:100px;text-align:center;top:358.7px;height:18px;line-height:18px;color:#262626;-webkit-text-stroke:0.2px #262626"><span style="font-size:12.5px">85</span></div>
<div class="t" style="left:4.7px;width:100px;text-align:center;top:377.7px;height:18px;line-height:18px;color:#262626;-webkit-text-stroke:0.2px #262626"><span style="font-size:12.5px">2</span><span style="font-size:12px">班</span></div>
<div class="t" style="left:64.2px;width:100px;text-align:center;top:377.7px;height:18px;line-height:18px;color:#262626;-webkit-text-stroke:0.2px #262626"><span style="font-size:12px">娜可露露</span></div>
<div class="t" style="left:124.7px;width:100px;text-align:center;top:377.7px;height:18px;line-height:18px;color:#262626;-webkit-text-stroke:0.2px #262626"><span style="font-size:12.5px">63</span></div>
<div class="t" style="left:4.7px;width:100px;text-align:center;top:397.2px;height:18px;line-height:18px;color:#262626;-webkit-text-stroke:0.2px #262626"><span style="font-size:12.5px">3</span><span style="font-size:12px">班</span></div>
<div class="t" style="left:64.2px;width:100px;text-align:center;top:397.2px;height:18px;line-height:18px;color:#262626;-webkit-text-stroke:0.2px #262626"><span style="font-size:12px">百里守约</span></div>
<div class="t" style="left:124.7px;width:100px;text-align:center;top:397.2px;height:18px;line-height:18px;color:#262626;-webkit-text-stroke:0.2px #262626"><span style="font-size:12.5px">93</span></div>
<div class="t" style="left:4.7px;width:100px;text-align:center;top:416.7px;height:18px;line-height:18px;color:#262626;-webkit-text-stroke:0.2px #262626"><span style="font-size:12.5px">2</span><span style="font-size:12px">班</span></div>
<div class="t" style="left:64.2px;width:100px;text-align:center;top:416.7px;height:18px;line-height:18px;color:#262626;-webkit-text-stroke:0.2px #262626"><span style="font-size:12px">猪八戒</span></div>
<div class="t" style="left:124.7px;width:100px;text-align:center;top:416.7px;height:18px;line-height:18px;color:#262626;-webkit-text-stroke:0.2px #262626"><span style="font-size:12.5px">72</span></div>
<div class="t" style="left:4.7px;width:100px;text-align:center;top:435.7px;height:18px;line-height:18px;color:#262626;-webkit-text-stroke:0.2px #262626"><span style="font-size:12.5px">3</span><span style="font-size:12px">班</span></div>
<div class="t" style="left:64.2px;width:100px;text-align:center;top:435.7px;height:18px;line-height:18px;color:#262626;-webkit-text-stroke:0.2px #262626"><span style="font-size:12px">成吉思汗</span></div>
<div class="t" style="left:124.7px;width:100px;text-align:center;top:435.7px;height:18px;line-height:18px;color:#262626;-webkit-text-stroke:0.2px #262626"><span style="font-size:12.5px">93</span></div>
<div class="t" style="left:367.5px;width:100px;text-align:center;top:143.3px;height:18px;line-height:18px;color:#222;-webkit-text-stroke:0.2px #222"><span style="font-size:12px">表</span><span style="font-size:12.5px">2</span></div>
<div class="a" style="left:326px;top:162px;width:183px;height:1px;background:#4a4a4a;"></div>
<div class="a" style="left:326px;top:167px;width:182px;height:19px;background:#2c58a4;"></div>
<div class="a" style="left:326px;top:167px;width:183px;height:1px;background:#5c5c5c;"></div>
<div class="a" style="left:326px;top:186px;width:183px;height:1px;background:#5c5c5c;"></div>
<div class="a" style="left:326px;top:205px;width:183px;height:1px;background:#5c5c5c;"></div>
<div class="a" style="left:326px;top:225px;width:183px;height:1px;background:#5c5c5c;"></div>
<div class="a" style="left:326px;top:244px;width:183px;height:1px;background:#5c5c5c;"></div>
<div class="a" style="left:326px;top:263px;width:183px;height:1px;background:#5c5c5c;"></div>
<div class="a" style="left:326px;top:282px;width:183px;height:1px;background:#5c5c5c;"></div>
<div class="a" style="left:326px;top:301px;width:183px;height:1px;background:#5c5c5c;"></div>
<div class="a" style="left:326px;top:321px;width:183px;height:1px;background:#5c5c5c;"></div>
<div class="a" style="left:326px;top:340px;width:183px;height:1px;background:#5c5c5c;"></div>
<div class="a" style="left:326px;top:359px;width:183px;height:1px;background:#5c5c5c;"></div>
<div class="a" style="left:326px;top:378px;width:183px;height:1px;background:#5c5c5c;"></div>
<div class="a" style="left:326px;top:397px;width:183px;height:1px;background:#5c5c5c;"></div>
<div class="a" style="left:326px;top:417px;width:183px;height:1px;background:#5c5c5c;"></div>
<div class="a" style="left:326px;top:436px;width:183px;height:1px;background:#5c5c5c;"></div>
<div class="a" style="left:326px;top:455px;width:183px;height:1px;background:#5c5c5c;"></div>
<div class="a" style="left:326px;top:167px;width:1px;height:289px;background:#5c5c5c;"></div>
<div class="a" style="left:387px;top:167px;width:1px;height:289px;background:#5c5c5c;"></div>
<div class="a" style="left:447px;top:167px;width:1px;height:289px;background:#5c5c5c;"></div>
<div class="a" style="left:508px;top:167px;width:1px;height:289px;background:#5c5c5c;"></div>
<div class="t" style="left:307.7px;width:100px;text-align:center;top:166.7px;height:18px;line-height:18px;color:#ffffff;-webkit-text-stroke:0.2px #ffffff"><span style="font-size:12px">班级</span></div>
<div class="t" style="left:366.7px;width:100px;text-align:center;top:166.7px;height:18px;line-height:18px;color:#ffffff;-webkit-text-stroke:0.2px #ffffff"><span style="font-size:12px">姓名</span></div>
<div class="t" style="left:427.2px;width:100px;text-align:center;top:166.7px;height:18px;line-height:18px;color:#ffffff;-webkit-text-stroke:0.2px #ffffff"><span style="font-size:12px">成绩</span></div>
<div class="t" style="left:307.7px;width:100px;text-align:center;top:185.7px;height:18px;line-height:18px;color:#262626;-webkit-text-stroke:0.2px #262626"><span style="font-size:12.5px">1</span><span style="font-size:12px">班</span></div>
<div class="t" style="left:366.7px;width:100px;text-align:center;top:185.7px;height:18px;line-height:18px;color:#262626;-webkit-text-stroke:0.2px #262626"><span style="font-size:12px">鲁班</span></div>
<div class="t" style="left:427.2px;width:100px;text-align:center;top:185.7px;height:18px;line-height:18px;color:#262626;-webkit-text-stroke:0.2px #262626"><span style="font-size:12.5px">92</span></div>
<div class="t" style="left:307.7px;width:100px;text-align:center;top:205.2px;height:18px;line-height:18px;color:#262626;-webkit-text-stroke:0.2px #262626"><span style="font-size:12.5px">2</span><span style="font-size:12px">班</span></div>
<div class="t" style="left:366.7px;width:100px;text-align:center;top:205.2px;height:18px;line-height:18px;color:#262626;-webkit-text-stroke:0.2px #262626"><span style="font-size:12px">李白</span></div>
<div class="t" style="left:427.2px;width:100px;text-align:center;top:205.2px;height:18px;line-height:18px;color:#262626;-webkit-text-stroke:0.2px #262626"><span style="font-size:12.5px">62</span></div>
<div class="t" style="left:307.7px;width:100px;text-align:center;top:224.7px;height:18px;line-height:18px;color:#262626;-webkit-text-stroke:0.2px #262626"><span style="font-size:12.5px">1</span><span style="font-size:12px">班</span></div>
<div class="t" style="left:366.7px;width:100px;text-align:center;top:224.7px;height:18px;line-height:18px;color:#262626;-webkit-text-stroke:0.2px #262626"><span style="font-size:12px">张飞</span></div>
<div class="t" style="left:427.2px;width:100px;text-align:center;top:224.7px;height:18px;line-height:18px;color:#262626;-webkit-text-stroke:0.2px #262626"><span style="font-size:12.5px">96</span></div>
<div class="t" style="left:307.7px;width:100px;text-align:center;top:243.7px;height:18px;line-height:18px;color:#262626;-webkit-text-stroke:0.2px #262626"><span style="font-size:12.5px">2</span><span style="font-size:12px">班</span></div>
<div class="t" style="left:366.7px;width:100px;text-align:center;top:243.7px;height:18px;line-height:18px;color:#262626;-webkit-text-stroke:0.2px #262626"><span style="font-size:12px">武则天</span></div>
<div class="t" style="left:427.2px;width:100px;text-align:center;top:243.7px;height:18px;line-height:18px;color:#262626;-webkit-text-stroke:0.2px #262626"><span style="font-size:12.5px">76</span></div>
<div class="t" style="left:307.7px;width:100px;text-align:center;top:262.7px;height:18px;line-height:18px;color:#262626;-webkit-text-stroke:0.2px #262626"><span style="font-size:12.5px">3</span><span style="font-size:12px">班</span></div>
<div class="t" style="left:366.7px;width:100px;text-align:center;top:262.7px;height:18px;line-height:18px;color:#262626;-webkit-text-stroke:0.2px #262626"><span style="font-size:12px">杨戬</span></div>
<div class="t" style="left:427.2px;width:100px;text-align:center;top:262.7px;height:18px;line-height:18px;color:#262626;-webkit-text-stroke:0.2px #262626"><span style="font-size:12.5px">85</span></div>
<div class="t" style="left:307.7px;width:100px;text-align:center;top:281.7px;height:18px;line-height:18px;color:#262626;-webkit-text-stroke:0.2px #262626"><span style="font-size:12.5px">2</span><span style="font-size:12px">班</span></div>
<div class="t" style="left:366.7px;width:100px;text-align:center;top:281.7px;height:18px;line-height:18px;color:#262626;-webkit-text-stroke:0.2px #262626"><span style="font-size:12px">娜可露露</span></div>
<div class="t" style="left:427.2px;width:100px;text-align:center;top:281.7px;height:18px;line-height:18px;color:#262626;-webkit-text-stroke:0.2px #262626"><span style="font-size:12.5px">63</span></div>
<div class="t" style="left:307.7px;width:100px;text-align:center;top:301.2px;height:18px;line-height:18px;color:#262626;-webkit-text-stroke:0.2px #262626"><span style="font-size:12.5px">3</span><span style="font-size:12px">班</span></div>
<div class="t" style="left:366.7px;width:100px;text-align:center;top:301.2px;height:18px;line-height:18px;color:#262626;-webkit-text-stroke:0.2px #262626"><span style="font-size:12px">百里守约</span></div>
<div class="t" style="left:427.2px;width:100px;text-align:center;top:301.2px;height:18px;line-height:18px;color:#262626;-webkit-text-stroke:0.2px #262626"><span style="font-size:12.5px">100</span></div>
<div class="t" style="left:307.7px;width:100px;text-align:center;top:320.7px;height:18px;line-height:18px;color:#262626;-webkit-text-stroke:0.2px #262626"><span style="font-size:12.5px">2</span><span style="font-size:12px">班</span></div>
<div class="t" style="left:366.7px;width:100px;text-align:center;top:320.7px;height:18px;line-height:18px;color:#262626;-webkit-text-stroke:0.2px #262626"><span style="font-size:12px">猪八戒</span></div>
<div class="t" style="left:427.2px;width:100px;text-align:center;top:320.7px;height:18px;line-height:18px;color:#262626;-webkit-text-stroke:0.2px #262626"><span style="font-size:12.5px">72</span></div>
<div class="t" style="left:307.7px;width:100px;text-align:center;top:339.7px;height:18px;line-height:18px;color:#262626;-webkit-text-stroke:0.2px #262626"><span style="font-size:12.5px">3</span><span style="font-size:12px">班</span></div>
<div class="t" style="left:366.7px;width:100px;text-align:center;top:339.7px;height:18px;line-height:18px;color:#262626;-webkit-text-stroke:0.2px #262626"><span style="font-size:12px">成吉思汗</span></div>
<div class="t" style="left:427.2px;width:100px;text-align:center;top:339.7px;height:18px;line-height:18px;color:#262626;-webkit-text-stroke:0.2px #262626"><span style="font-size:12.5px">93</span></div>
<div class="t" style="left:307.7px;width:100px;text-align:center;top:358.7px;height:18px;line-height:18px;color:#262626;-webkit-text-stroke:0.2px #262626"><span style="font-size:12.5px">1</span><span style="font-size:12px">班</span></div>
<div class="t" style="left:366.7px;width:100px;text-align:center;top:358.7px;height:18px;line-height:18px;color:#262626;-webkit-text-stroke:0.2px #262626"><span style="font-size:12px">宫本武藏</span></div>
<div class="t" style="left:427.2px;width:100px;text-align:center;top:358.7px;height:18px;line-height:18px;color:#262626;-webkit-text-stroke:0.2px #262626"><span style="font-size:12.5px">87</span></div>
<div class="t" style="left:307.7px;width:100px;text-align:center;top:377.7px;height:18px;line-height:18px;color:#262626;-webkit-text-stroke:0.2px #262626"><span style="font-size:12.5px">3</span><span style="font-size:12px">班</span></div>
<div class="t" style="left:366.7px;width:100px;text-align:center;top:377.7px;height:18px;line-height:18px;color:#262626;-webkit-text-stroke:0.2px #262626"><span style="font-size:12px">嫦娥</span></div>
<div class="t" style="left:427.2px;width:100px;text-align:center;top:377.7px;height:18px;line-height:18px;color:#262626;-webkit-text-stroke:0.2px #262626"><span style="font-size:12.5px">94</span></div>
<div class="t" style="left:307.7px;width:100px;text-align:center;top:397.2px;height:18px;line-height:18px;color:#262626;-webkit-text-stroke:0.2px #262626"><span style="font-size:12.5px">1</span><span style="font-size:12px">班</span></div>
<div class="t" style="left:366.7px;width:100px;text-align:center;top:397.2px;height:18px;line-height:18px;color:#262626;-webkit-text-stroke:0.2px #262626"><span style="font-size:12px">刘备</span></div>
<div class="t" style="left:427.2px;width:100px;text-align:center;top:397.2px;height:18px;line-height:18px;color:#262626;-webkit-text-stroke:0.2px #262626"><span style="font-size:12.5px">99</span></div>
<div class="t" style="left:307.7px;width:100px;text-align:center;top:416.7px;height:18px;line-height:18px;color:#262626;-webkit-text-stroke:0.2px #262626"><span style="font-size:12.5px">3</span><span style="font-size:12px">班</span></div>
<div class="t" style="left:366.7px;width:100px;text-align:center;top:416.7px;height:18px;line-height:18px;color:#262626;-webkit-text-stroke:0.2px #262626"><span style="font-size:12px">孙尚香</span></div>
<div class="t" style="left:427.2px;width:100px;text-align:center;top:416.7px;height:18px;line-height:18px;color:#262626;-webkit-text-stroke:0.2px #262626"><span style="font-size:12.5px">60</span></div>
<div class="t" style="left:307.7px;width:100px;text-align:center;top:435.7px;height:18px;line-height:18px;color:#262626;-webkit-text-stroke:0.2px #262626"><span style="font-size:12.5px">2</span><span style="font-size:12px">班</span></div>
<div class="t" style="left:366.7px;width:100px;text-align:center;top:435.7px;height:18px;line-height:18px;color:#262626;-webkit-text-stroke:0.2px #262626"><span style="font-size:12px">狄仁杰</span></div>
<div class="t" style="left:427.2px;width:100px;text-align:center;top:435.7px;height:18px;line-height:18px;color:#262626;-webkit-text-stroke:0.2px #262626"><span style="font-size:12.5px">75</span></div>
<div class="a" style="left:326px;top:358px;width:62px;height:21px;border:2px solid #367a52"></div>
<div class="a" style="left:386px;top:377px;width:4px;height:4px;background:#367a52;"></div>
<svg class="a" style="left:464px;top:380px;" width="44" height="44" viewBox="0 0 44 44"><circle cx="22" cy="22.3" r="17.5" fill="none" stroke="#f5b98c" stroke-width="2.6" opacity="0.8"/></svg>
<svg class="a" style="left:482px;top:397.5px;" width="12" height="12" viewBox="0 0 12 12"><path d="M4 1 L7 1 L7 4 L10 4 L10 7 L7 7 L7 10 L4 10 L4 7 L1 7 L1 4 L4 4 Z" fill="#fff" stroke="#111" stroke-width="1"/></svg>
</body></html>
